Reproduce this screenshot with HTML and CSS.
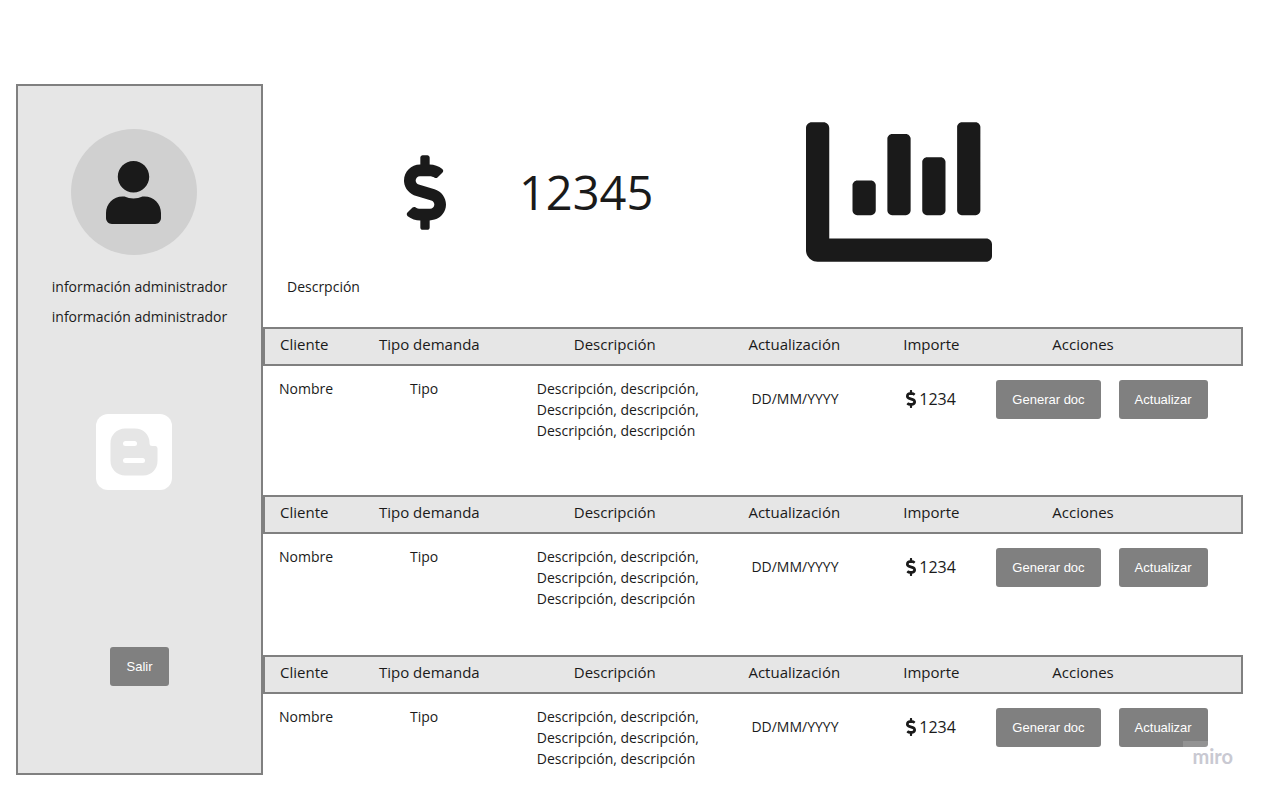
FILE: index.html
```html
<!DOCTYPE html>
<html lang="es">
<head>
<meta charset="utf-8">
<title>Panel de administrador</title>
<meta name="viewport" content="width=device-width, initial-scale=1">
<link rel="stylesheet" href="styles.css">
</head>
<body>
<svg class="defs" aria-hidden="true">
  <symbol id="dollar" viewBox="0 0 288 512"><path d="M209.2 233.4l-108-31.6C88.7 198.2 80 186.5 80 173.5c0-16.3 13.2-29.5 29.5-29.5h66.3c12.2 0 24.2 3.7 34.2 10.5 6.1 4.1 14.3 3.1 19.5-2l34.8-34c7.1-6.9 6.1-18.4-1.8-24.5C238 74.8 207.4 64.1 176 64V16c0-8.800-7.200-16-16-16h-32c-8.800 0-16 7.200-16 16v48h-2.500C45.800 64-5.400 118.700.500 183.600c4.200 46.100 39.400 83.600 83.800 96.600l102.500 30c12.500 3.700 21.200 15.300 21.200 28.300 0 16.300-13.200 29.500-29.500 29.500h-66.300C100 368 88 364.300 78 357.500c-6.100-4.100-14.300-3.100-19.500 2l-34.800 34c-7.100 6.900-6.100 18.400 1.800 24.500 24.500 19.200 55.100 29.900 86.500 30v48c0 8.800 7.200 16 16 16h32c8.800 0 16-7.200 16-16v-48.200c46.600-.9 90.300-28.600 105.700-72.700 21.500-61.600-14.600-124.800-72.500-141.700z"/></symbol>
</svg>

<div class="layout">
  <aside class="sidebar">
    <div class="avatar">
      <svg class="avatar-icon" viewBox="0 0 448 512" aria-hidden="true"><path d="M224 256c70.7 0 128-57.3 128-128S294.7 0 224 0 96 57.3 96 128s57.3 128 128 128zm89.6 32h-16.700c-22.200 10.200-46.900 16-72.900 16s-50.600-5.800-72.900-16h-16.700C60.200 288 0 348.200 0 422.400V464c0 26.500 21.500 48 48 48h352c26.500 0 48-21.500 48-48v-41.600c0-74.200-60.200-134.400-134.400-134.400z"/></svg>
    </div>
    <p class="info">información administrador</p>
    <p class="info">información administrador</p>
    <svg class="brand" viewBox="0 0 76 76" aria-hidden="true">
      <rect class="brand-tile" width="76" height="76" rx="12"/>
      <path class="brand-mark" d="M29 14.500H39C47 14.500 53.500 20.500 53.500 28.500C53.500 31 54 32 56.500 32H59.500Q61.500 32 61.500 34.500V47C61.500 55 55.500 61.500 47.500 61.500H29C21 61.500 14.500 55 14.500 47V29C14.500 21 21 14.500 29 14.500Z"/>
      <rect class="brand-tile" x="27" y="27" width="14" height="5" rx="2.500"/>
      <rect class="brand-tile" x="27" y="44" width="22" height="5" rx="2.500"/>
    </svg>
    <button class="btn" type="button">Salir</button>
  </aside>

  <main class="main">
    <section class="summary">
      <svg class="summary-dollar" aria-hidden="true"><use href="#dollar"/></svg>
      <span class="summary-total">12345</span>
      <svg class="summary-chart" viewBox="0 64 512 384" aria-hidden="true"><path d="M332.8 320h38.4c6.4 0 12.8-6.4 12.8-12.8V172.8c0-6.4-6.4-12.8-12.8-12.8h-38.4c-6.4 0-12.8 6.4-12.8 12.8v134.4c0 6.4 6.4 12.8 12.8 12.8zm96 0h38.4c6.4 0 12.8-6.4 12.8-12.8V76.8c0-6.4-6.4-12.8-12.8-12.8h-38.4c-6.4 0-12.8 6.4-12.8 12.8v230.4c0 6.4 6.4 12.8 12.8 12.8zm-288 0h38.4c6.4 0 12.8-6.4 12.8-12.8v-70.4c0-6.4-6.4-12.8-12.8-12.8h-38.4c-6.4 0-12.8 6.4-12.8 12.8v70.4c0 6.4 6.4 12.8 12.8 12.8zm96 0h38.4c6.4 0 12.8-6.4 12.8-12.8V108.8c0-6.4-6.4-12.8-12.8-12.8h-38.4c-6.4 0-12.8 6.4-12.8 12.8v198.4c0 6.4 6.4 12.8 12.8 12.8zM496 384H64V80c0-8.84-7.16-16-16-16H16C7.16 64 0 71.16 0 80v336c0 17.67 14.33 32 32 32h464c8.84 0 16-7.16 16-16v-32c0-8.84-7.16-16-16-16z"/></svg>
    </section>
    <p class="caption">Descrpción</p>

    <table class="claims claims-first">
      <thead><tr><th class="client">Cliente</th><th class="type">Tipo demanda</th><th class="desc">Descripción</th><th class="date">Actualización</th><th class="amount">Importe</th><th class="actions">Acciones</th></tr></thead>
      <tbody><tr>
        <td class="client">Nombre</td><td class="type">Tipo</td>
        <td class="desc">Descripción, descripción,<br>Descripción, descripción,<br>Descripción, descripción</td>
        <td class="date">DD/MM/YYYY</td>
        <td class="amount"><span class="money"><svg class="money-icon" aria-hidden="true"><use href="#dollar"/></svg>1234</span></td>
        <td class="actions"><div class="buttons"><button class="btn" type="button">Generar doc</button><button class="btn" type="button">Actualizar</button></div></td>
      </tr></tbody>
    </table>

    <table class="claims">
      <thead><tr><th class="client">Cliente</th><th class="type">Tipo demanda</th><th class="desc">Descripción</th><th class="date">Actualización</th><th class="amount">Importe</th><th class="actions">Acciones</th></tr></thead>
      <tbody><tr>
        <td class="client">Nombre</td><td class="type">Tipo</td>
        <td class="desc">Descripción, descripción,<br>Descripción, descripción,<br>Descripción, descripción</td>
        <td class="date">DD/MM/YYYY</td>
        <td class="amount"><span class="money"><svg class="money-icon" aria-hidden="true"><use href="#dollar"/></svg>1234</span></td>
        <td class="actions"><div class="buttons"><button class="btn" type="button">Generar doc</button><button class="btn" type="button">Actualizar</button></div></td>
      </tr></tbody>
    </table>

    <table class="claims claims-last">
      <thead><tr><th class="client">Cliente</th><th class="type">Tipo demanda</th><th class="desc">Descripción</th><th class="date">Actualización</th><th class="amount">Importe</th><th class="actions">Acciones</th></tr></thead>
      <tbody><tr>
        <td class="client">Nombre</td><td class="type">Tipo</td>
        <td class="desc">Descripción, descripción,<br>Descripción, descripción,<br>Descripción, descripción</td>
        <td class="date">DD/MM/YYYY</td>
        <td class="amount"><span class="money"><svg class="money-icon" aria-hidden="true"><use href="#dollar"/></svg>1234</span></td>
        <td class="actions"><div class="buttons"><button class="btn" type="button">Generar doc</button><button class="btn" type="button">Actualizar</button></div></td>
      </tr></tbody>
    </table>
    <div class="watermark">miro</div>
  </main>
</div>
</body>
</html>
```
FILE: styles.css
```css
* { box-sizing: border-box; }

body {
  margin: 0;
  background: #fff;
  color: #1a1a1a;
  font-family: "Open Sans", "Noto Sans", sans-serif;
  font-size: 14px;
  line-height: 21px;
}

p { margin: 0; }
svg { display: block; fill: currentColor; flex: none; }
.defs { display: none; }

.layout {
  display: grid;
  grid-template-columns: 247px 1fr;
  padding: 84px 19px 17px 16px;
}

.sidebar {
  display: flex;
  flex-direction: column;
  align-items: center;
  padding-top: 43px;
  background: #e6e6e6;
  border: 2px solid #808080;
}

.avatar {
  display: grid;
  place-items: center;
  width: 126px;
  height: 126px;
  margin: 0 12px 21px 0;
  border-radius: 50%;
  background: #d0d0d0;
}

.avatar-icon { width: 55px; height: 63px; }
.info { margin-bottom: 9px; }
.brand { width: 76px; height: 76px; margin: 78px 12px 157px 0; }
.brand-tile { fill: #fff; }
.brand-mark { fill: #e6e6e6; }

.btn {
  height: 39px;
  padding: 0 16px;
  border: 0;
  border-radius: 3px;
  background: #808080;
  color: #fff;
  font: 13px "Liberation Sans", Arial, sans-serif;
}

.main { position: relative; padding-bottom: 6px; }

.summary {
  display: flex;
  align-items: center;
  height: 192px;
  padding: 24px 0 0 141px;
}

.summary-dollar { width: 42px; height: 75px; }
.summary-total { margin-left: 73px; font-size: 47px; line-height: 64px; }
.summary-chart { width: 186px; height: 140px; margin-left: 153px; }
.caption { padding: 0 24px 30px; }

.claims {
  width: 100%;
  margin-bottom: 46px;
  table-layout: fixed;
  border-spacing: 0;
}

.claims-first { margin-bottom: 54px; }
.claims-last { margin-bottom: 0; }

.claims th {
  height: 39px;
  padding: 0 0 5px 17px;
  border: solid #808080;
  border-width: 2px 0;
  background: #e6e6e6;
  font-size: 15px;
  font-weight: 400;
  line-height: 20px;
  text-align: left;
}

.claims td {
  padding: 12px 0 0 16px;
  vertical-align: top;
  white-space: nowrap;
}

.client { width: 10.1%; }
.type { width: 16%; }
.desc { width: 21.7%; }
.date { width: 15.8%; }
.amount { width: 9.6%; }

.claims th.client { border-left-width: 2px; padding-left: 15px; }
.claims th.desc { padding-left: 55px; }
.claims th.actions { border-right-width: 2px; padding-left: 72px; }
.claims td.type { padding-left: 48px; }
.claims td.desc { padding-left: 18px; }
.claims td.date { padding: 22px 0 0 20px; }
.claims td.amount { padding: 22px 0 0 20px; }
.claims td.actions { padding-top: 14px; }

.money { display: flex; align-items: center; gap: 3px; font-size: 16px; line-height: 22px; }
.money-icon { width: 10px; height: 18px; }
.buttons { display: flex; gap: 18px; }

.watermark {
  position: absolute;
  right: 0;
  bottom: 0;
  padding: 5px 10px 8px;
  background: rgba(255, 255, 255, 0.15);
  color: #c9c9d2;
  font: 700 20px/21px Lato, sans-serif;
}
```
